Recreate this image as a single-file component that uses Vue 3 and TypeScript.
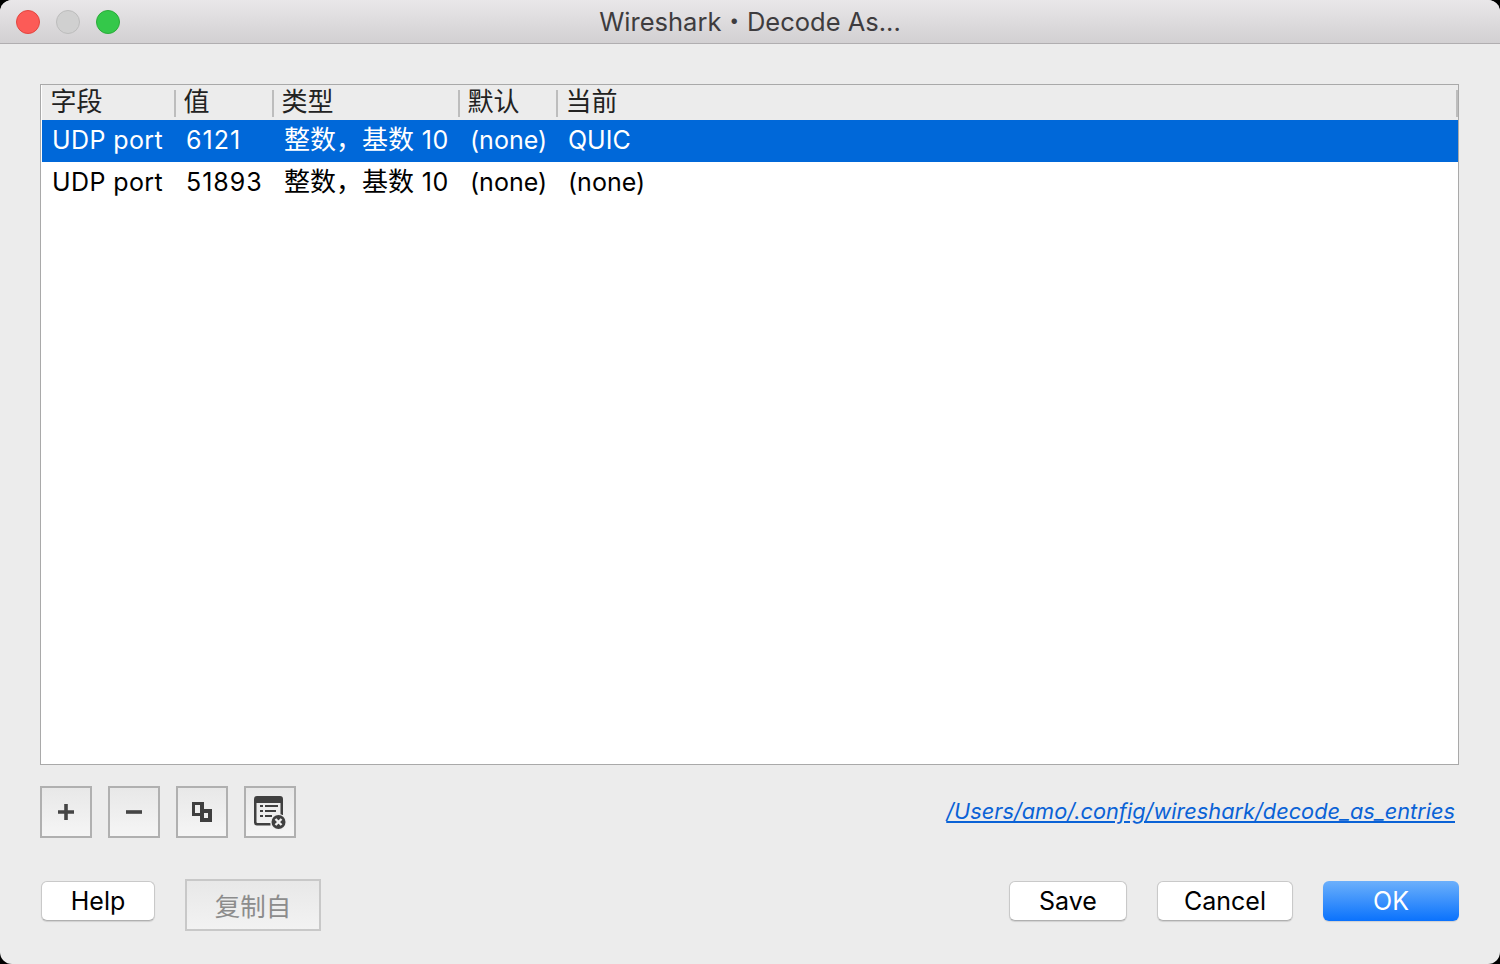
<script setup lang="ts">
interface Row { field: string; value: string; type: string; base: string; def: string; cur: string; selected: boolean }
const headers: string[] = ['字段', '值', '类型', '默认', '当前']
const rows: Row[] = [
  { field: 'UDP port', value: '6121', type: '整数，基数', base: ' 10', def: '(none)', cur: 'QUIC', selected: true },
  { field: 'UDP port', value: '51893', type: '整数，基数', base: ' 10', def: '(none)', cur: '(none)', selected: false },
]
</script>

<template>
  <div class="screen">
    <div class="window">
      <header class="titlebar">
        <div class="lights">
          <span class="light red"></span>
          <span class="light gray"></span>
          <span class="light green"></span>
        </div>
        <div class="title">Wireshark・Decode As...</div>
      </header>
      <main class="content">
        <section class="table">
          <div class="thead">
            <div v-for="h in headers" :key="h" class="th"><span>{{ h }}</span></div>
          </div>
          <div v-for="(r, i) in rows" :key="i" class="tr" :class="{ selected: r.selected }">
            <div class="td field">{{ r.field }}</div>
            <div class="td value">{{ r.value }}</div>
            <div class="td"><span class="cjk">{{ r.type }}</span><span class="base">{{ r.base }}</span></div>
            <div class="td">{{ r.def }}</div>
            <div class="td">{{ r.cur }}</div>
          </div>
        </section>
        <div class="tools">
          <button class="tool">
            <svg width="18" height="18" viewBox="0 0 18 18"><path d="M7.200 1h3.600v6.200H17v3.600h-6.200V17H7.200v-6.200H1V7.200h6.200z" fill="#454545"/></svg>
          </button>
          <button class="tool">
            <svg width="18" height="18" viewBox="0 0 18 18"><rect x="1" y="7.200" width="16" height="3.600" fill="#454545"/></svg>
          </button>
          <button class="tool">
            <svg width="22" height="22" viewBox="0 0 22 22">
              <path fill-rule="evenodd" fill="#3f3f3f" d="M1 1h12v7h8v13H9v-6H1zM4 4v8h5V8h0V4zM13 12v5h4v-5z"/>
            </svg>
          </button>
          <button class="tool">
            <svg width="36" height="36" viewBox="0 0 36 36">
              <path d="M2 5a3 3 0 0 1 3-3h23a3 3 0 0 1 3 3v16h-2.500V9h-24v19a1 1 0 0 0 1 1h13v2.500H5a3 3 0 0 1-3-3z" fill="#404040"/>
              <g fill="#404040">
                <rect x="8" y="11" width="3" height="2"/><rect x="13" y="11" width="13" height="2"/>
                <rect x="8" y="16" width="3" height="2"/><rect x="13" y="16" width="11" height="2"/>
                <rect x="8" y="21" width="3" height="2"/><rect x="13" y="21" width="7" height="2"/>
              </g>
              <circle cx="26.500" cy="28" r="8" fill="#ececec"/>
              <circle cx="26.500" cy="28" r="7" fill="#404040"/>
              <path d="M23.500 25l6 6M29.500 25l-6 6" stroke="#f0f0f0" stroke-width="2.400" fill="none"/>
            </svg>
          </button>
          <a class="path">/Users/amo/.config/wireshark/decode_as_entries</a>
        </div>
        <footer class="actions">
          <button class="btn help">Help</button>
          <button class="copy" disabled>复制自</button>
          <div class="spacer"></div>
          <button class="btn save">Save</button>
          <button class="btn cancel">Cancel</button>
          <button class="btn ok">OK</button>
        </footer>
      </main>
    </div>
  </div>
</template>

<style>
html, body { margin: 0; background: #000; }
</style>

<style scoped>
.screen {
  width: 1500px;
  height: 964px;
  overflow: hidden;
  background: #000;
  font-family: Inter, "Noto Sans CJK SC", sans-serif;
}
.window {
  width: 1500px;
  height: 964px;
  background: #ececec;
  border-radius: 12px;
  overflow: hidden;
  display: flex;
  flex-direction: column;
}
.titlebar {
  height: 43px;
  flex: none;
  position: relative;
  display: flex;
  align-items: center;
  justify-content: center;
  background: linear-gradient(#e9e7e9, #d2d0d2);
  border-bottom: 1px solid #b0aeb0;
}
.lights {
  position: absolute;
  left: 16px;
  top: 10px;
  display: flex;
  gap: 16px;
}
.light {
  width: 24px;
  height: 24px;
  box-sizing: border-box;
  border-radius: 50%;
  border: 1px solid;
}
.red { background: #fc5b57; border-color: #e2463f; }
.gray { background: #d0d0d0; border-color: #bcbcbc; }
.green { background: #34c84a; border-color: #2bab3a; }
.title {
  font-size: 25.500px;
  color: #3e3c3e;
  line-height: 46px;
}
.content {
  flex: 1;
  display: flex;
  flex-direction: column;
  padding: 40px 41px 0 40px;
}
.table {
  height: 681px;
  box-sizing: border-box;
  border: 1px solid #a9a9a9;
  background: #fff;
  flex: none;
}
.thead, .tr {
  display: grid;
  grid-template-columns: 134px 98px 186px 98px 1fr;
  margin-left: 1px;
}
.thead {
  height: 35px;
  background: #ececec;
  color: #222;
}
.th {
  font-size: 26px;
  padding-left: 8.500px;
  display: flex;
  align-items: center;
  border-right: 2px solid #bdbdbd;
  margin: 5px 0 1px;
  height: 27px;
  box-sizing: border-box;
}
.th span { position: relative; top: -4px; }
.th:nth-child(n + 2) { margin-left: -1px; }
.tr {
  height: 42px;
  color: #000;
  font-size: 25px;
  line-height: 40px;
  white-space: pre;
}
.td { padding-left: 10px; }
.field { letter-spacing: 0.400px; }
.value { letter-spacing: 1px; }
.base { letter-spacing: 0.700px; }
.cjk { font-size: 26px; }
.tr.selected {
  background: #0068d9;
  color: #fff;
}
.tools {
  display: flex;
  align-items: center;
  gap: 16px;
  margin-top: 21px;
  height: 52px;
  flex: none;
}
.tool {
  width: 52px;
  height: 52px;
  padding: 0;
  box-sizing: border-box;
  border: 2px solid #b0b0b0;
  background: linear-gradient(#e8e8e8, #f5f5f5);
  display: flex;
  align-items: center;
  justify-content: center;
}
.path {
  margin-left: auto;
  margin-right: 4px;
  color: #0a62d6;
  font-size: 21.750px;
  font-style: italic;
  text-decoration: underline;
  position: relative;
  top: -1px;
}
.actions {
  display: flex;
  align-items: flex-start;
  margin-top: 41px;
  height: 52px;
  flex: none;
}
.btn {
  height: 40px;
  margin-top: 2px;
  box-sizing: border-box;
  border-radius: 6px;
  border: 1px solid #c9c9c9;
  border-bottom-color: #b0b0b0;
  background: #fff;
  color: #000;
  font: 25px Inter, sans-serif;
  padding: 0;
  box-shadow: 0 1px 1px rgba(0, 0, 0, 0.12);
}
.help { width: 114px; margin-left: 1px; }
.copy {
  width: 136px;
  height: 52px;
  margin-left: 30px;
  box-sizing: border-box;
  border: 2px solid #c8c8c8;
  background: linear-gradient(#e8e8e8, #f2f2f2);
  color: #8c8c8c;
  font: 25.500px "Noto Sans CJK SC", sans-serif;
  line-height: 44px;
  padding: 0;
}
.spacer { flex: 1; }
.save { width: 118px; }
.cancel { width: 136px; margin-left: 30px; }
.ok {
  width: 136px;
  margin-left: 30px;
  border: none;
  color: #fff;
  background: linear-gradient(#6cb0fb, #0a72fd);
}
</style>
